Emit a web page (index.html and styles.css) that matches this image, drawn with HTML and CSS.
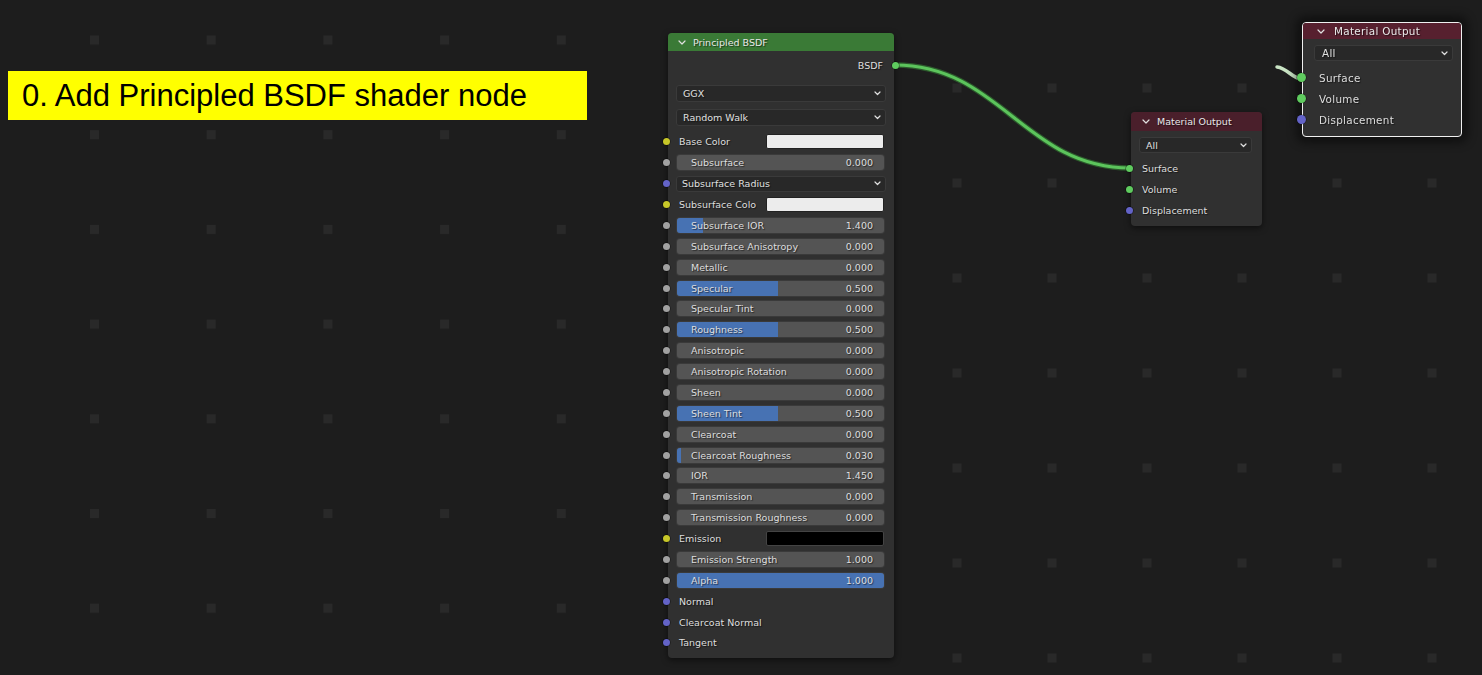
FILE: index.html
```html
<!DOCTYPE html>
<html>
<head>
<meta charset="utf-8">
<link rel="stylesheet" href="styles.css">
</head>
<body>
<div class="canvas">
  <svg class="backdrop" width="1482" height="675">
    <defs>
      <pattern id="gl" patternUnits="userSpaceOnUse" x="90" y="35.5" width="116.7" height="94.7">
        <rect width="9" height="9" fill="#292929"/>
      </pattern>
      <pattern id="gr" patternUnits="userSpaceOnUse" x="952.5" y="178.5" width="95" height="95">
        <rect width="9" height="9" fill="#292929"/>
      </pattern>
    </defs>
    <rect x="0" y="0" width="664" height="675" fill="url(#gl)"/>
    <rect x="900" y="0" width="582" height="675" fill="url(#gr)"/>
  </svg>

  <div class="banner">0. Add Principled BSDF shader node</div>

  <svg class="links" width="1482" height="675">
    <path d="M895 65 C1000 65 1025 168 1130 168" class="link-edge"/>
    <path d="M895 65 C1000 65 1025 168 1130 168" class="link-core"/>
    <path d="M1277 67 C1287 68 1292 78 1301 79" class="link-faded"/>
  </svg>

  <!-- Principled BSDF -->
  <div class="node bsdf">
    <div class="node-head green">
      <svg class="chev" width="8" height="5" viewBox="0 0 8 5"><path d="M1 1l3 3 3-3"/></svg>
      <span>Principled BSDF</span>
    </div>
    <div class="out-row"><span>BSDF</span><i class="sock out green-s"></i></div>
    <div class="dd first"><span>GGX</span><svg class="chev small" width="7" height="5" viewBox="0 0 7 5"><path d="M1 1l2.5 2.5 2.5-2.5"/></svg></div>
    <div class="dd"><span>Random Walk</span><svg class="chev small" width="7" height="5" viewBox="0 0 7 5"><path d="M1 1l2.5 2.5 2.5-2.5"/></svg></div>
    <div class="inputs">
      <div class="row"><i class="sock yellow"></i><span class="lab">Base Color</span><span class="swatch white"></span></div>
      <div class="row"><i class="sock grey"></i><div class="slider"><span class="sl">Subsurface</span><span class="sv">0.000</span></div></div>
      <div class="row"><i class="sock purple"></i><div class="dd inrow"><span>Subsurface Radius</span><svg class="chev small" width="7" height="5" viewBox="0 0 7 5"><path d="M1 1l2.5 2.5 2.5-2.5"/></svg></div></div>
      <div class="row"><i class="sock yellow"></i><span class="lab">Subsurface Colo</span><span class="swatch white"></span></div>
      <div class="row"><i class="sock grey"></i><div class="slider"><div class="fill" style="width:26px"></div><span class="sl">Subsurface IOR</span><span class="sv">1.400</span></div></div>
      <div class="row"><i class="sock grey"></i><div class="slider"><span class="sl">Subsurface Anisotropy</span><span class="sv">0.000</span></div></div>
      <div class="row"><i class="sock grey"></i><div class="slider"><span class="sl">Metallic</span><span class="sv">0.000</span></div></div>
      <div class="row"><i class="sock grey"></i><div class="slider"><div class="fill" style="width:101px"></div><span class="sl">Specular</span><span class="sv">0.500</span></div></div>
      <div class="row"><i class="sock grey"></i><div class="slider"><span class="sl">Specular Tint</span><span class="sv">0.000</span></div></div>
      <div class="row"><i class="sock grey"></i><div class="slider"><div class="fill" style="width:101px"></div><span class="sl">Roughness</span><span class="sv">0.500</span></div></div>
      <div class="row"><i class="sock grey"></i><div class="slider"><span class="sl">Anisotropic</span><span class="sv">0.000</span></div></div>
      <div class="row"><i class="sock grey"></i><div class="slider"><span class="sl">Anisotropic Rotation</span><span class="sv">0.000</span></div></div>
      <div class="row"><i class="sock grey"></i><div class="slider"><span class="sl">Sheen</span><span class="sv">0.000</span></div></div>
      <div class="row"><i class="sock grey"></i><div class="slider"><div class="fill" style="width:101px"></div><span class="sl">Sheen Tint</span><span class="sv">0.500</span></div></div>
      <div class="row"><i class="sock grey"></i><div class="slider"><span class="sl">Clearcoat</span><span class="sv">0.000</span></div></div>
      <div class="row"><i class="sock grey"></i><div class="slider"><div class="fill" style="width:4px"></div><span class="sl">Clearcoat Roughness</span><span class="sv">0.030</span></div></div>
      <div class="row"><i class="sock grey"></i><div class="slider"><span class="sl">IOR</span><span class="sv">1.450</span></div></div>
      <div class="row"><i class="sock grey"></i><div class="slider"><span class="sl">Transmission</span><span class="sv">0.000</span></div></div>
      <div class="row"><i class="sock grey"></i><div class="slider"><span class="sl">Transmission Roughness</span><span class="sv">0.000</span></div></div>
      <div class="row"><i class="sock yellow"></i><span class="lab">Emission</span><span class="swatch black"></span></div>
      <div class="row"><i class="sock grey"></i><div class="slider"><span class="sl">Emission Strength</span><span class="sv">1.000</span></div></div>
      <div class="row"><i class="sock grey"></i><div class="slider"><div class="fill" style="width:100%"></div><span class="sl">Alpha</span><span class="sv">1.000</span></div></div>
      <div class="row"><i class="sock purple"></i><span class="lab">Normal</span></div>
      <div class="row"><i class="sock purple"></i><span class="lab">Clearcoat Normal</span></div>
      <div class="row"><i class="sock purple"></i><span class="lab">Tangent</span></div>
    </div>
  </div>

  <!-- Material Output (middle) -->
  <div class="node mat">
    <div class="node-head maroon">
      <svg class="chev" width="8" height="5" viewBox="0 0 8 5"><path d="M1 1l3 3 3-3"/></svg>
      <span>Material Output</span>
    </div>
    <div class="dd mat-dd"><span>All</span><svg class="chev small" width="7" height="5" viewBox="0 0 7 5"><path d="M1 1l2.5 2.5 2.5-2.5"/></svg></div>
    <div class="mat-rows">
      <div class="row"><i class="sock green-s"></i><span class="lab">Surface</span></div>
      <div class="row"><i class="sock green-s"></i><span class="lab">Volume</span></div>
      <div class="row"><i class="sock purple"></i><span class="lab">Displacement</span></div>
    </div>
  </div>

  <!-- Material Output (top right, selected) -->
  <div class="node mat2">
    <div class="node-head maroon2">
      <svg class="chev" width="8" height="5" viewBox="0 0 8 5"><path d="M1 1l3 3 3-3"/></svg>
      <span>Material Output</span>
    </div>
    <div class="dd mat2-dd"><span>All</span><svg class="chev small" width="7" height="5" viewBox="0 0 7 5"><path d="M1 1l2.5 2.5 2.5-2.5"/></svg></div>
    <div class="mat-rows m2">
      <div class="row"><i class="sock big green-s"></i><span class="lab">Surface</span></div>
      <div class="row"><i class="sock big green-s"></i><span class="lab">Volume</span></div>
      <div class="row"><i class="sock big purple"></i><span class="lab">Displacement</span></div>
    </div>
  </div>
</div>
</body>
</html>
```
FILE: styles.css
```css
* { box-sizing: border-box; }
body {
  margin: 0;
  background: #1d1d1d;
  width: 1482px;
  height: 675px;
  overflow: hidden;
  font-family: "DejaVu Sans", "Liberation Sans", sans-serif;
}
.canvas {
  position: relative;
  width: 1482px;
  height: 675px;
  background: #1d1d1d;
}
.backdrop, .links {
  position: absolute;
  left: 0;
  top: 0;
}
.link-edge { fill: none; stroke: #2c5a2c; stroke-width: 5.5; }
.link-core { fill: none; stroke: #5cc45c; stroke-width: 3; }
.link-faded { fill: none; stroke: #c9e4c4; stroke-width: 3.5; stroke-linecap: round; }

.banner {
  position: absolute;
  left: 8px;
  top: 71px;
  width: 579px;
  height: 49px;
  background: #ffff00;
  color: #000;
  display: flex;
  align-items: center;
  padding-left: 14px;
  font-family: "Liberation Sans", Arial, sans-serif;
  font-size: 31px;
  white-space: nowrap;
}

/* nodes */
.node {
  position: absolute;
  background: #303030;
  border-radius: 4px;
  box-shadow: 0 2px 6px rgba(0,0,0,0.55);
  color: #dedede;
  font-size: 9.5px;
  text-shadow: 1px 1px 1px rgba(0,0,0,0.55);
  display: flex;
  flex-direction: column;
}
.node-head {
  display: flex;
  align-items: center;
  gap: 7px;
  padding-left: 10px;
  border-radius: 4px 4px 0 0;
  color: #e8e8e8;
  flex: none;
}
.node-head.green { background: #3a7a36; height: 18px; }
.node-head.maroon { background: #4a1f2b; height: 19px; padding-left: 11px; }
.node-head.maroon2 { background: #57202f; height: 16px; padding-left: 14px; gap: 9px; border-radius: 3px 3px 0 0; }
.chev path { fill: none; stroke: #e0e0e0; stroke-width: 1.2; stroke-linecap: round; stroke-linejoin: round; }
.chev.small { margin-left: auto; }

.sock {
  position: absolute;
  width: 7px;
  height: 7px;
  border-radius: 50%;
  top: 50%;
  left: -5.5px;
  margin-top: -3.5px;
  box-shadow: 0 0 0 0.5px rgba(0,0,0,0.6);
}
.sock.out { left: auto; right: -4.5px; }
.sock.big { width: 9px; height: 9px; margin-top: -4.5px; left: -5.5px; }
.grey { background: #a1a1a1; }
.yellow { background: #c7c729; }
.purple { background: #6363c7; }
.green-s { background: #5fcb5f; }

/* Principled */
.bsdf {
  left: 668px;
  top: 33px;
  width: 226px;
  height: 625px;
}
.out-row {
  position: relative;
  height: 20px;
  margin-top: 4px;
  display: flex;
  align-items: center;
  justify-content: flex-end;
  padding-right: 11px;
}
.dd {
  height: 17px;
  margin: 7px 8px 0 8px;
  background: #282828;
  border: 1px solid #3a3a3a;
  border-radius: 3px;
  display: flex;
  align-items: center;
  padding: 0 4px 0 6px;
  color: #e0e0e0;
}
.dd.first { margin-top: 10px; }
.dd.inrow { margin: 0; flex: 1; height: 16px; padding-left: 5px; margin-left: -1px; margin-right: -2px; }
.inputs {
  margin-top: 5.5px;
  display: flex;
  flex-direction: column;
}
.row {
  position: relative;
  height: 20.875px;
  display: flex;
  align-items: center;
  padding: 0 10px 0 9px;
}
.lab { padding-left: 2px; }
.swatch {
  margin-left: auto;
  width: 118px;
  height: 15px;
  border-radius: 2px;
  border: 1px solid #222;
}
.swatch.white { background: #ececec; }
.swatch.black { background: #000; border-color: #444; }
.slider {
  position: relative;
  flex: 1;
  height: 15px;
  background: #545454;
  border-radius: 3px;
  box-shadow: 0 0 0 1px #3a3a3a;
  display: flex;
  align-items: center;
  padding: 0 11px 0 14px;
  overflow: hidden;
}
.fill {
  position: absolute;
  left: 0;
  top: 0;
  bottom: 0;
  background: #4772b3;
}
.sl, .sv { position: relative; }
.sv { margin-left: auto; }

/* Material output middle */
.mat {
  left: 1131px;
  top: 112px;
  width: 131px;
  height: 114px;
}
.mat-dd {
  margin: 6px 10px 0 8px;
  height: 16px;
  padding-left: 6px;
}
.mat-rows {
  margin-top: 4.5px;
  display: flex;
  flex-direction: column;
}
.mat-rows .row { height: 21px; padding-left: 9px; }

/* Material output top right */
.mat2 {
  left: 1302px;
  top: 22px;
  width: 160px;
  height: 115px;
  border: 1.5px solid #f0f0f0;
  font-size: 10.4px;
  letter-spacing: 0.3px;
  box-shadow: 0 0 10px 6px rgba(0,0,0,0.45);
  filter: blur(0.35px);
}
.mat2-dd {
  margin: 6px 8px 0 11px;
  height: 16px;
  padding-left: 7px;
}
.mat-rows.m2 { margin-top: 6px; }
.mat-rows.m2 .row { padding-left: 14px; }
.mat-rows.m2 .sock { left: -6px; }
```
